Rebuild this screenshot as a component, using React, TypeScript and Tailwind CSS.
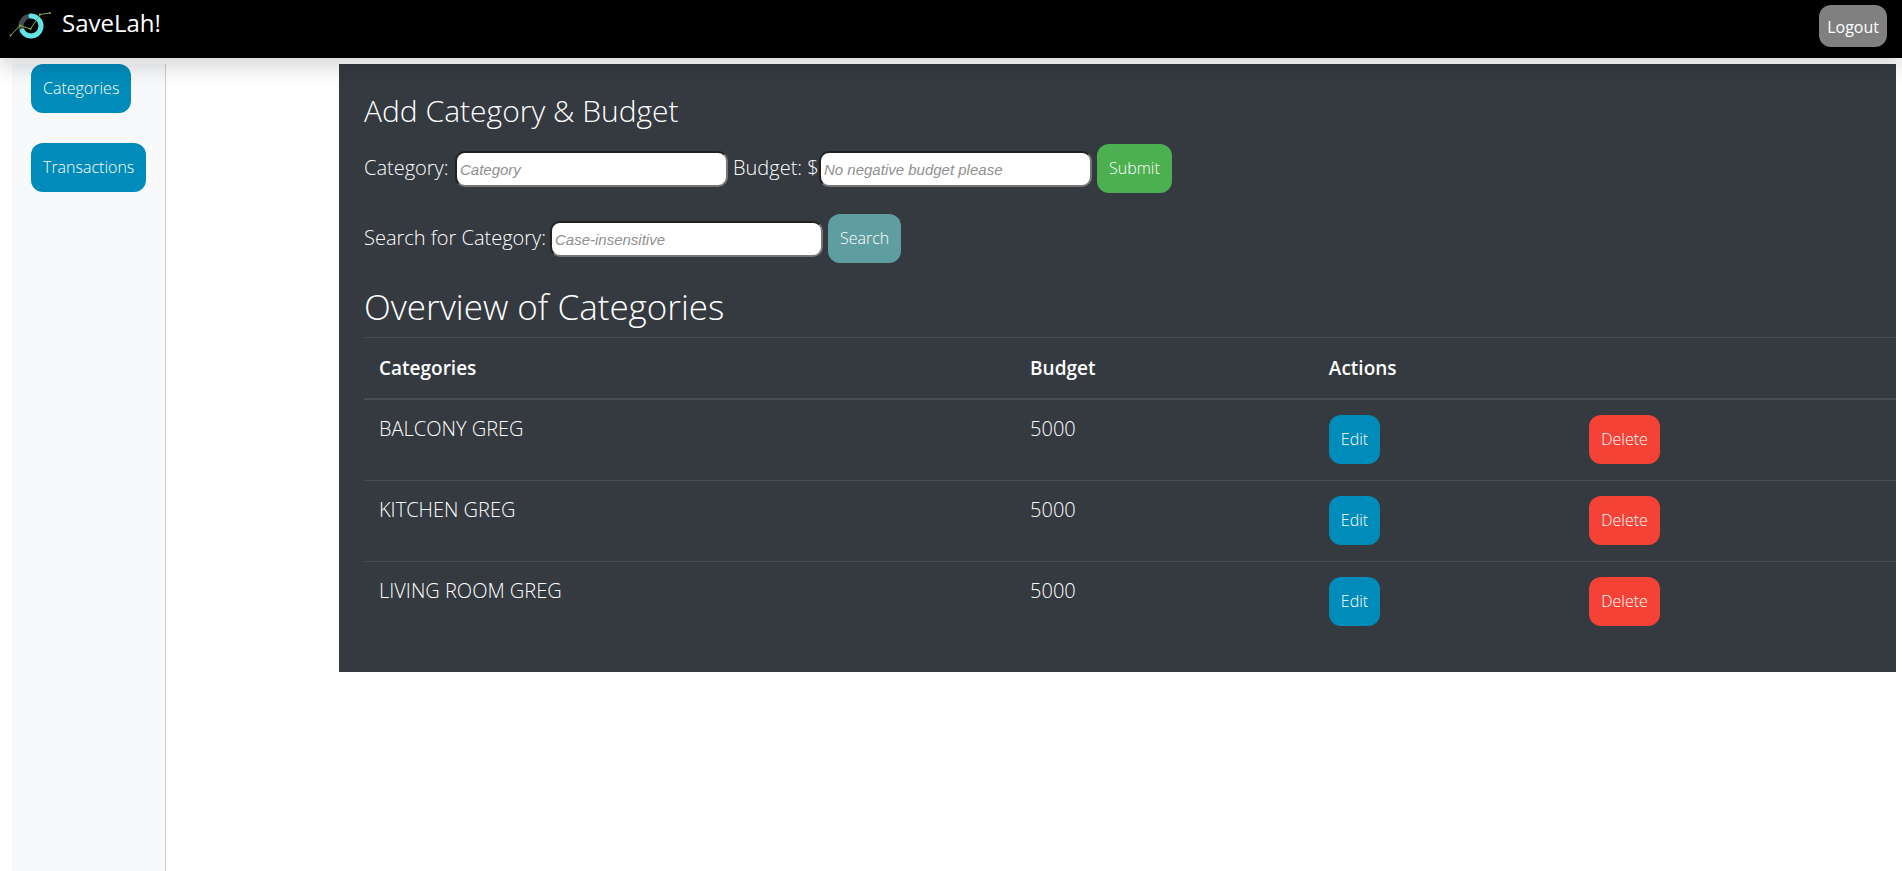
import type { ButtonHTMLAttributes, InputHTMLAttributes } from "react";

interface Category {
  name: string;
  budget: number;
}

const categories: Category[] = [
  { name: "BALCONY GREG", budget: 5000 },
  { name: "KITCHEN GREG", budget: 5000 },
  { name: "LIVING ROOM GREG", budget: 5000 },
];

const tones = {
  blue: "bg-[#008cba]",
  green: "bg-[#4caf50]",
  teal: "bg-[#5f9ea0]",
  red: "bg-[#f44336]",
};

function Button({
  tone,
  ...rest
}: { tone: keyof typeof tones } & ButtonHTMLAttributes<HTMLButtonElement>) {
  return (
    <button
      type="button"
      className={`block shrink-0 cursor-pointer rounded-xl px-3 py-3 text-base leading-[25px] text-white ${tones[tone]}`}
      {...rest}
    />
  );
}

function TextField(props: InputHTMLAttributes<HTMLInputElement>) {
  return (
    <input
      className="w-[273px] rounded-[10px] border-2 border-t-[#212121] border-r-[#767676] border-b-[#767676] border-l-[#212121] bg-white px-[3px] pt-1.5 pb-1 font-['Liberation_Sans',sans-serif] text-[15px] leading-[22px] font-normal text-black italic placeholder:text-[#8f8f8f]"
      {...props}
    />
  );
}

function Logo() {
  return (
    <svg viewBox="0 0 44 30" className="h-[30px] w-11" fill="none" aria-hidden="true">
      <circle cx="23" cy="15" r="10" stroke="#434a54" strokeWidth="5" />
      <path d="M23 5a10 10 0 1 1-8.6 15" stroke="#62e3e8" strokeWidth="5" strokeLinecap="round" />
      <path d="M2.5 24.5 12 14.5 22.5 18 32 3.5 42 2" stroke="#7fb23f" strokeWidth="1" />
      <g fill="#7fb23f">
        <circle cx="2.5" cy="24.5" r="1" />
        <circle cx="12" cy="14.5" r="1" />
        <circle cx="22.5" cy="18" r="1" />
        <circle cx="32" cy="3.5" r="1" />
        <circle cx="42" cy="2" r="1" />
      </g>
    </svg>
  );
}

export default function App() {
  return (
    <div className="flex min-h-screen flex-col bg-white font-['Open_Sans',sans-serif] text-xl font-light">
      <header className="relative z-10 flex h-[58px] items-start justify-between bg-black pr-[15px] pl-2 text-white shadow-[0_10px_20px_rgba(0,0,0,0.15)]">
        <a href="#home" className="flex items-start gap-2.5 text-2xl leading-[46px] font-normal">
          <span className="pt-[11px]">
            <Logo />
          </span>
          SaveLah!
        </a>
        <button
          type="button"
          className="mt-[5px] cursor-pointer rounded-xl bg-[#808080] px-2 pt-2.5 pb-2 text-base font-normal"
        >
          Logout
        </button>
      </header>

      <div className="flex grow pt-1.5 pr-1.5 pl-3">
        <nav className="flex w-[154px] shrink-0 flex-col items-start gap-[30px] border-r border-[#cccccc] bg-[#f8f9fa] pl-[19px]">
          <Button tone="blue">Categories</Button>
          <Button tone="blue">Transactions</Button>
        </nav>

        <main className="ml-[173px] grow self-start bg-[#343a40] pt-[27px] pb-[30px] pl-[25px] text-white">
          <h2 className="text-3xl leading-10">Add Category &amp; Budget</h2>

          <form className="mt-[13px] flex items-center">
            <label htmlFor="category" className="min-w-[91px] pb-0.5">
              Category:
            </label>
            <TextField id="category" placeholder="Category" />
            <label htmlFor="budget" className="min-w-[91px] pb-0.5 pl-[5px]">
              Budget: $
            </label>
            <TextField id="budget" placeholder="No negative budget please" />
            <span className="pl-[5px]">
              <Button tone="green" type="submit">
                Submit
              </Button>
            </span>
          </form>

          <form className="mt-[21px] flex items-center">
            <label htmlFor="search" className="min-w-[186px] pb-0.5">
              Search for Category:
            </label>
            <TextField id="search" placeholder="Case-insensitive" />
            <span className="pl-[5px]">
              <Button tone="teal" type="submit">
                Search
              </Button>
            </span>
          </form>

          <h1 className="mt-[22px] mb-2 text-[35px] leading-[44px]">Overview of Categories</h1>

          <table className="w-full table-fixed border-collapse text-left">
            <colgroup>
              <col className="w-[42.5%]" />
              <col className="w-[19.5%]" />
              <col className="w-[17%]" />
              <col className="w-[21%]" />
            </colgroup>
            <thead>
              <tr className="border-t border-b-2 border-[#454d55] text-[19px] leading-7">
                <th className="px-[15px] py-4 font-semibold">Categories</th>
                <th className="px-[15px] py-4 font-semibold">Budget</th>
                <th className="px-[15px] py-4 font-semibold" colSpan={2}>
                  Actions
                </th>
              </tr>
            </thead>
            <tbody>
              {categories.map(({ name, budget }) => (
                <tr key={name} className="border-t border-[#454d55] align-top">
                  <td className="px-[15px] pt-[15px] pb-4">{name}</td>
                  <td className="px-[15px] pt-[15px] pb-4">{budget}</td>
                  <td className="px-[15px] pt-[15px] pb-4">
                    <Button tone="blue" aria-label={`Edit ${name}`}>
                      Edit
                    </Button>
                  </td>
                  <td className="px-[15px] pt-[15px] pb-4">
                    <Button tone="red" aria-label={`Delete ${name}`}>
                      Delete
                    </Button>
                  </td>
                </tr>
              ))}
            </tbody>
          </table>
        </main>
      </div>
    </div>
  );
}
